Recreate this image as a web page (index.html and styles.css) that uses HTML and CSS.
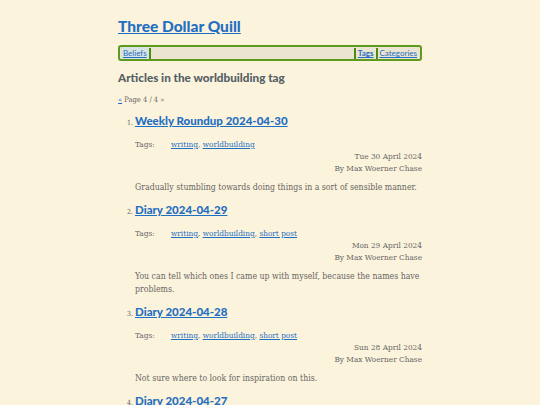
FILE: index.html
```html
<!DOCTYPE html>
<html>
<head>
<meta charset="utf-8">
<link rel="stylesheet" href="styles.css">
</head>
<body>
<div class="page">
  <header class="site-head">
    <h1 class="site-title"><a href="#">Three Dollar Quill</a></h1>
    <nav class="menu">
      <a class="menu-link current" href="#">Beliefs</a>
      <span class="sep"></span>
      <span class="spacer"></span>
      <span class="sep"></span>
      <a class="menu-link bold" href="#">Tags</a>
      <span class="sep"></span>
      <a class="menu-link" href="#">Categories</a>
    </nav>
  </header>
  <h2 class="page-heading">Articles in the worldbuilding tag</h2>
  <div class="pager"><a href="#">«</a> Page 4 / 4 »</div>
  <ol class="articles" start="1">
    <li class="article">
      <h3 class="article-title"><a href="#">Weekly Roundup 2024-04-30</a></h3>
      <div class="tags"><span class="tags-label">Tags:</span><span><a href="#">writing</a>, <a href="#">worldbuilding</a></span></div>
      <div class="meta">Tue 30 April 2024<br>By Max Woerner Chase</div>
      <p class="summary">Gradually stumbling towards doing things in a sort of sensible manner.</p>
    </li>
    <li class="article">
      <h3 class="article-title"><a href="#">Diary 2024-04-29</a></h3>
      <div class="tags"><span class="tags-label">Tags:</span><span><a href="#">writing</a>, <a href="#">worldbuilding</a>, <a href="#">short post</a></span></div>
      <div class="meta">Mon 29 April 2024<br>By Max Woerner Chase</div>
      <p class="summary">You can tell which ones I came up with myself, because the names have problems.</p>
    </li>
    <li class="article">
      <h3 class="article-title"><a href="#">Diary 2024-04-28</a></h3>
      <div class="tags"><span class="tags-label">Tags:</span><span><a href="#">writing</a>, <a href="#">worldbuilding</a>, <a href="#">short post</a></span></div>
      <div class="meta">Sun 28 April 2024<br>By Max Woerner Chase</div>
      <p class="summary">Not sure where to look for inspiration on this.</p>
    </li>
    <li class="article">
      <h3 class="article-title"><a href="#">Diary 2024-04-27</a></h3>
      <div class="tags"><span class="tags-label">Tags:</span><span><a href="#">writing</a>, <a href="#">worldbuilding</a>, <a href="#">short post</a></span></div>
      <div class="meta">Sat 27 April 2024<br>By Max Woerner Chase</div>
      <p class="summary">More names.</p>
    </li>
  </ol>
</div>
</body>
</html>
```
FILE: styles.css
```css
html, body {
  margin: 0;
  padding: 0;
  background: #fcf3dc;
}
body {
  font-family: "DejaVu Serif Condensed", "DejaVu Serif", serif;
  font-size: 8px;
  color: #666;
}
.page {
  width: 304px;
  margin: 0 auto;
  padding-top: 14px;
}
.site-title {
  margin: 0;
  font-family: "Lato", "Noto Sans", sans-serif;
  font-size: 15.5px;
  font-weight: 900;
  line-height: 24px;
}
.site-title a { color: #1f6fc2; }
a { color: #1f6fc2; }
.menu {
  margin-top: 7px;
  display: flex;
  align-items: center;
  height: 12px;
  border: 2px solid #5e9a1e;
  border-radius: 3px;
  background: #ebe4d0;
  padding: 0 1px;
  font-family: "Lato", "Noto Sans", sans-serif;
  font-size: 8px;
}
.menu-link {
  padding: 0 2px;
  line-height: 12px;
}
.menu-link.current { background: #d8e3e4; }
.menu-link.bold { font-weight: 700; }
.sep {
  width: 2px;
  height: 11px;
  background: #4d8a12;
}
.spacer { flex: 1; }
.page-heading {
  margin: 8px 0 0;
  font-family: "Lato", "Noto Sans", sans-serif;
  font-size: 11.7px;
  font-weight: 900;
  line-height: 16px;
  color: #555f66;
}
.pager {
  margin-top: 10px;
  font-size: 7.5px;
  line-height: 10px;
}
.articles {
  margin: 8px 0 0;
  padding-left: 17px;
}
.article::marker {
  font-size: 7px;
}
.article-title {
  margin: 0;
  font-family: "Lato", "Noto Sans", sans-serif;
  font-size: 11.5px;
  font-weight: 900;
  line-height: 16px;
}
.tags {
  margin-top: 9px;
  display: flex;
  font-size: 8.2px;
  line-height: 12px;
}
.tags-label { width: 36px; }
.meta {
  text-align: right;
  font-size: 8.2px;
  line-height: 12px;
}
.summary {
  margin: 7px 0 8px;
  font-size: 8.7px;
  line-height: 13px;
}
```
